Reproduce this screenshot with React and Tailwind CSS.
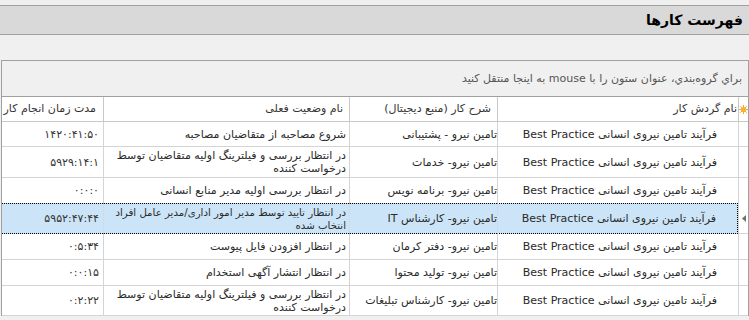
const rows = [
  { flow: 'فرآیند تامین نیروی انسانی Best Practice', desc: 'تامین نیرو - پشتیبانی', status: ['شروع مصاحبه از متقاضیان مصاحبه'], time: '۱۴۲۰:۴۱:۵۰', h: 'h-[25px]' },
  { flow: 'فرآیند تامین نیروی انسانی Best Practice', desc: 'تامین نیرو- خدمات', status: ['در انتظار بررسی و فیلترینگ اولیه متقاضیان توسط', 'درخواست کننده'], time: '۵۹۲۹:۱۴:۱', h: 'h-[31px]' },
  { flow: 'فرآیند تامین نیروی انسانی Best Practice', desc: 'تامین نیرو- برنامه نویس', status: ['در انتظار بررسی اولیه مدیر منابع انسانی'], time: '۰:۰:۰', h: 'h-[25px]', beforeSel: true },
  { flow: 'فرآیند تامین نیروی انسانی Best Practice', desc: 'تامین نیرو- کارشناس IT', status: ['در انتظار تایید توسط مدیر امور اداری/مدیر عامل افراد', 'انتخاب شده'], time: '۵۹۵۲:۴۷:۴۴', h: 'h-[31px]', selected: true },
  { flow: 'فرآیند تامین نیروی انسانی Best Practice', desc: 'تامین نیرو- دفتر کرمان', status: ['در انتظار افزودن فایل پیوست'], time: '۰:۵:۳۴', h: 'h-[26px]' },
  { flow: 'فرآیند تامین نیروی انسانی Best Practice', desc: 'تامین نیرو- تولید محتوا', status: ['در انتظار انتشار آگهی استخدام'], time: '۰:۰:۱۵', h: 'h-[26px]' },
  { flow: 'فرآیند تامین نیروی انسانی Best Practice', desc: 'تامین نیرو- کارشناس تبلیغات', status: ['در انتظار بررسی و فیلترینگ اولیه متقاضیان توسط', 'درخواست کننده'], time: '۰:۲:۲۲', h: 'h-[30px]' },
]

function Star() {
  return (
    <svg width="9" height="9" viewBox="0 0 9 9" className="mx-auto">
      <g stroke="#f6a623" strokeWidth="1">
        <line x1="4.5" y1="0" x2="4.5" y2="9" />
        <line x1="0" y1="4.5" x2="9" y2="4.5" />
        <line x1="1.3" y1="1.3" x2="7.7" y2="7.7" />
        <line x1="7.7" y1="1.3" x2="1.3" y2="7.7" />
      </g>
      <circle cx="4.5" cy="4.5" r="2.6" fill="#fbb03b" />
    </svg>
  )
}

function Arrow() {
  return (
    <svg width="4" height="7" viewBox="0 0 4 7" className="mx-auto">
      <polygon points="4,0 4,7 0,3.5" fill="#707070" />
    </svg>
  )
}

export default function App() {
  return (
    <div
      dir="rtl"
      className="w-[749px] h-[320px] overflow-hidden bg-[#f0f0f0] pt-[5px] text-[11px] text-[#2a2a2a]"
      style={{ fontFamily: '"DejaVu Sans", Tahoma, sans-serif' }}
    >
      <div className="h-[30px] border-y border-[#a0a0a0] bg-[#d9d9d9] flex items-center pr-[6px]">
        <span className="text-[14px] font-bold text-black">فهرست کارها</span>
      </div>
      <div className="h-[25px]" />
      <div className="w-[748px] border border-[#a0a0a0] border-b-0 bg-white">
        <div className="h-[36px] bg-[#f0f0f0] border-b border-[#a0a0a0] flex items-center pr-[6px] text-[#555] pt-[1px]">
          براي گروه‌بندي، عنوان ستون را با mouse به اينجا منتقل کنيد
        </div>
        <table className="table-fixed border-separate border-spacing-0 w-[746px]">
          <colgroup>
            <col className="w-[10px]" />
            <col className="w-[241px]" />
            <col className="w-[148px]" />
            <col className="w-[246px]" />
            <col className="w-[101px]" />
          </colgroup>
          <thead>
            <tr className="h-[25px] text-[#333]">
              <th className="border-l border-b border-[#c8c8c8] font-normal p-0"><Star /></th>
              <th className="border-l border-b border-[#c8c8c8] font-normal text-right pr-[1px]">نام گردش کار</th>
              <th className="border-l border-b border-[#c8c8c8] font-normal text-right pr-[6px]">شرح کار (منبع دیجیتال)</th>
              <th className="border-l border-b border-[#c8c8c8] font-normal text-right pr-[6px]">نام وضعیت فعلی</th>
              <th className="border-b border-[#c8c8c8] font-normal text-right pr-[7px]">مدت زمان انجام کار</th>
            </tr>
          </thead>
          <tbody>
            {rows.map((r, i) => {
              const sel = r.selected
              const cell = sel
                ? 'bg-[#cce4f7] border-y border-dotted border-y-black border-l border-l-[#d4d4d4]'
                : r.beforeSel
                ? 'border-l border-[#d4d4d4]'
                : 'border-l border-b border-[#d4d4d4]'
              const lastCell = sel
                ? 'bg-[#cce4f7] border-y border-dotted border-y-black'
                : r.beforeSel
                ? ''
                : 'border-b border-[#d4d4d4]'
              return (
                <tr key={i} className={r.h}>
                  <td className={`p-0 align-middle border-l border-[#d4d4d4] ${r.beforeSel ? '' : 'border-b'}`}>
                    {sel && <Arrow />}
                  </td>
                  <td className={`${cell} ${sel ? 'border-r border-r-black border-dotted' : ''} text-right pr-[21px] whitespace-nowrap overflow-hidden leading-[15px]`}>
                    {r.flow}
                  </td>
                  <td className={`${cell} text-right pr-0 whitespace-nowrap overflow-hidden leading-[15px]`}>
                    {r.desc}
                  </td>
                  <td className={`${cell} ${sel ? 'text-[10.2px]' : ''} text-right pr-[3px] leading-[13px] whitespace-nowrap overflow-hidden`}>
                    {r.status.map((line, j) => (
                      <div key={j}>{line}</div>
                    ))}
                  </td>
                  <td className={`${lastCell} text-right pr-[4px] whitespace-nowrap leading-[15px] text-[#333]`}>
                    {r.time}
                  </td>
                </tr>
              )
            })}
          </tbody>
        </table>
      </div>
    </div>
  )
}
